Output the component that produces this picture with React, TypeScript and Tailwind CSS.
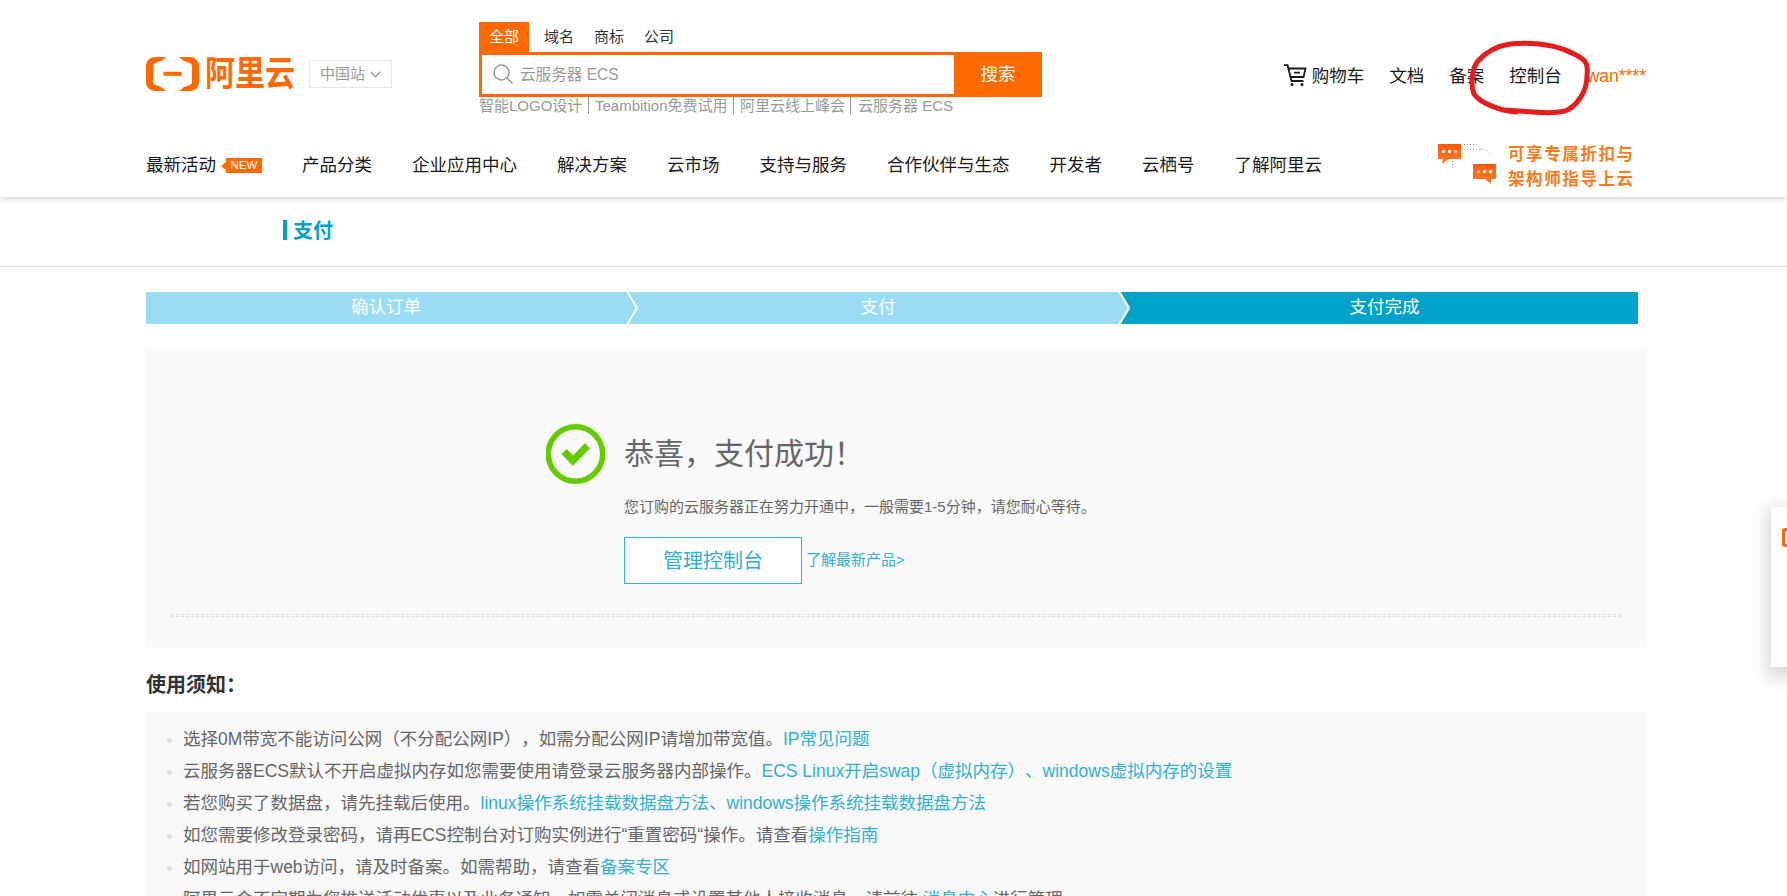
import React from "react";

const nav = ["产品分类", "企业应用中心", "解决方案", "云市场", "支持与服务", "合作伙伴与生态", "开发者", "云栖号", "了解阿里云"];

const notes: { text: string; link: string; tail?: string }[] = [
  { text: "选择0M带宽不能访问公网（不分配公网IP），如需分配公网IP请增加带宽值。", link: "IP常见问题" },
  { text: "云服务器ECS默认不开启虚拟内存如您需要使用请登录云服务器内部操作。", link: "ECS Linux开启swap（虚拟内存）、windows虚拟内存的设置" },
  { text: "若您购买了数据盘，请先挂载后使用。", link: "linux操作系统挂载数据盘方法、windows操作系统挂载数据盘方法" },
  { text: "如您需要修改登录密码，请再ECS控制台对订购实例进行“重置密码“操作。请查看", link: "操作指南" },
  { text: "如网站用于web访问，请及时备案。如需帮助，请查看", link: "备案专区" },
  { text: "阿里云会不定期为您推送活动优惠以及业务通知，如需关闭消息或设置其他人接收消息，请前往 ", link: "消息中心", tail: "进行管理" },
];

function Logo() {
  return (
    <div className="flex h-[34px] w-[148px] items-center text-[#ff6a00]">
      <svg width="53" height="34" viewBox="0 0 53 34" fill="currentColor" className="shrink-0">
        <path d="M20 0H9C4 0 0 4 0 9v16c0 5 4 9 9 9h11l-5-4-5.500-2c-1.700-.6-2.500-1.600-2.500-3.300V9.300c0-1.700.8-2.700 2.500-3.300l5.500-2z" />
        <path d="M33 0h11c5 0 9 4 9 9v16c0 5-4 9-9 9H33l5-4 5.500-2c1.700-.6 2.500-1.600 2.500-3.300V9.300c0-1.700-.8-2.700-2.500-3.300l-5.500-2z" />
        <rect x="17.500" y="14.800" width="18" height="4" />
      </svg>
      <span className="ml-[6px] origin-center scale-y-[1.16] whitespace-nowrap text-[30px] leading-[34px] font-bold">阿里云</span>
    </div>
  );
}

function Cart() {
  return (
    <svg width="23" height="23" viewBox="0 0 23 23" fill="none" stroke="#1a1a1a" strokeWidth="1.800" className="mr-[5px] shrink-0">
      <path d="M0 1.200h3.600L7.500 17H19.500M4.500 4.500H21.500L19.500 13H6.600M10 8.700h6" />
      <circle cx="8" cy="20.500" r="1.500" fill="#1a1a1a" stroke="none" />
      <circle cx="18" cy="20.500" r="1.500" fill="#1a1a1a" stroke="none" />
    </svg>
  );
}

function PromoArt() {
  return (
    <svg width="62" height="44" viewBox="0 0 62 44" className="shrink-0">
      <defs>
        <linearGradient id="bubble" x1="0" y1="0" x2="0" y2="1">
          <stop offset="0" stopColor="#ff5a08" />
          <stop offset="1" stopColor="#ff8030" />
        </linearGradient>
      </defs>
      <path d="M1 1h23v15H11.500l-6 5v-5H1z" fill="url(#bubble)" />
      <path d="M36 21h23v15h-5v5l-6-5H36z" fill="url(#bubble)" />
      <g fill="#fff">
        <circle cx="6.500" cy="8.500" r="1.700" /><circle cx="12.500" cy="8.500" r="1.700" /><circle cx="18.500" cy="8.500" r="1.700" opacity=".6" />
        <circle cx="41.500" cy="28.500" r="1.700" opacity=".6" /><circle cx="47.500" cy="28.500" r="1.700" /><circle cx="53.500" cy="28.500" r="1.700" />
      </g>
      <path d="M27 6.500h18q7 0 8 6M15.500 18v8" fill="none" stroke="#f59a60" strokeDasharray="1 2" />
      <path d="M27 1.500h11q5 1 6 5" fill="none" stroke="#888" strokeDasharray="1 2" />
    </svg>
  );
}

function Header() {
  return (
    <header className="relative h-[197px] bg-white shadow-[0_2px_6px_rgba(0,0,0,0.16)]">
      <div className="ml-[146px] flex h-[130px] w-[1500px] items-start">
        <div className="mt-[57px] flex w-[333px] items-start">
          <Logo />
          <div className="mt-[3px] ml-[15px] flex h-[28px] w-[83px] items-center justify-center gap-[5px] border border-[#e8e8e8] text-[15px] text-[#999]">
            中国站
            <svg width="11" height="7" viewBox="0 0 11 7" fill="none" stroke="#999" strokeWidth="1.300"><path d="M.7.7l4.800 5 4.800-5" /></svg>
          </div>
        </div>
        <div className="mt-[22px] w-[563px] text-[15px]">
          <div className="flex h-[30px] items-center text-[#333]">
            <span className="flex h-[30px] w-[50px] items-center justify-center bg-[#ff6a00] text-white">全部</span>
            <span className="ml-[15px]">域名</span>
            <span className="ml-[20px]">商标</span>
            <span className="ml-[20px]">公司</span>
          </div>
          <div className="flex h-[45px] border-[3px] border-r-0 border-[#ff6a00]">
            <div className="flex w-[472px] items-center text-[15.600px] text-[#999]">
              <svg width="21" height="21" viewBox="0 0 21 21" fill="none" stroke="#999" strokeWidth="1.500" className="mr-[6px] ml-[11px]">
                <circle cx="8.500" cy="8.500" r="7.500" /><path d="M14 14l5.500 5.500" />
              </svg>
              <span className="pt-px">云服务器 ECS</span>
            </div>
            <div className="-my-[3px] flex w-[88px] items-center justify-center bg-[#ff6a00] text-[17.500px] text-white">搜索</div>
          </div>
          <div className="flex h-[17px] items-center whitespace-nowrap leading-[17px] text-[#999]">
            <span className="w-[110px] border-r border-[#999]">智能LOGO设计</span>
            <span className="w-[145px] border-r border-[#999] pl-[6px]">Teambition免费试用</span>
            <span className="w-[117px] border-r border-[#999] pl-[6px]">阿里云线上峰会</span>
            <span className="pl-[7px]">云服务器 ECS</span>
          </div>
        </div>
        <div className="mt-[62px] ml-auto flex h-[27px] items-center whitespace-nowrap text-[17.500px] text-[#1a1a1a]">
          <Cart />
          <span className="pt-px">购物车</span>
          <span className="ml-[25px] pt-px">文档</span>
          <span className="ml-[25px] pt-px">备案</span>
          <span className="ml-[25px] pt-px">控制台</span>
          <span className="ml-[25px] pt-px text-[#ff6a00]">wan****</span>
        </div>
      </div>
      <div className="ml-[146px] flex h-[67px] w-[1500px] items-start whitespace-nowrap text-[17.500px] text-[#1a1a1a]">
        <div className="mt-[22px] flex h-[27px] items-center gap-[40px]">
          <span className="flex items-center">
            最新活动
            <svg width="5" height="8" viewBox="0 0 5 8" className="ml-[5px]"><path d="M0 4L5 0v8z" fill="#ff6a00" /></svg>
            <span className="flex h-[15px] w-[36px] items-center justify-center bg-[#ff6a00] text-[11.500px] text-white">NEW</span>
          </span>
          {nav.map((n) => <span key={n}>{n}</span>)}
        </div>
        <div className="mt-[13px] ml-auto flex w-[209px]">
          <PromoArt />
          <div className="-mt-px ml-[9px] text-[16.500px] leading-[25px] font-bold tracking-[1.600px] text-[#ff7a1a]">
            <div>可享专属折扣与</div>
            <div>架构师指导上云</div>
          </div>
        </div>
      </div>
      <svg className="absolute top-[40px] left-[1466px]" width="126" height="80" viewBox="0 0 126 80" fill="none" stroke="#e71d1d" strokeWidth="5" strokeLinecap="round" strokeLinejoin="round">
        <path d="M50 72C36 71 15 64 8 54C4 44 6 28 12 21C20 12 30 6 44 4C65 2 90 4 110 15C122 21 122 26 121 36C121 52 110 67 99 71C82 75 64 71 36 70" />
      </svg>
    </header>
  );
}

function Steps() {
  return (
    <div className="flex h-[32px] w-[1492px] bg-[#9bdcf5] text-[17.500px] leading-[30px] text-white">
      <div className="w-[480px] text-center">确认订单</div>
      <svg width="12" height="32" viewBox="0 0 12 32"><path d="M1.500 0l9.500 16L1.500 32" fill="none" stroke="#fff" strokeWidth="2" /></svg>
      <div className="w-[480px] text-center">支付</div>
      <svg width="13" height="32" viewBox="0 0 13 32"><path d="M1.500 0H13v32H1.500l9.500-16z" fill="#00a2ca" /><path d="M1.500 0l9.500 16L1.500 32" fill="none" stroke="#fff" strokeWidth="2.200" /></svg>
      <div className="w-[507px] bg-[#00a2ca] text-center">支付完成</div>
    </div>
  );
}

export default function App() {
  return (
    <div className="relative h-[896px] w-[1787px] overflow-hidden bg-white font-['Liberation_Sans','Noto_Sans_CJK_SC',sans-serif] text-[#666] [text-spacing-trim:space-all]">
      <Header />
      <div className="flex h-[70px] border-b border-[#e0e0e0] pt-[23px] pl-[283px]">
        <div className="flex h-[20px] items-center border-l-4 border-[#00a2ca] pt-[2px] pl-[6px] text-[20px] font-bold text-[#00a2ca]">支付</div>
      </div>
      <main className="ml-[146px] w-[1500px] pt-[25px]">
        <Steps />
        <section className="mt-[25px] h-[298px] bg-[#f9f9f9] pt-[75px]">
          <div className="ml-[400px] flex items-start">
            <svg width="60" height="60" viewBox="0 0 60 60" className="shrink-0">
              <circle cx="29.500" cy="30" r="27.200" fill="none" stroke="#66cc00" strokeWidth="5.600" />
              <path d="M15.500 30l5.200-5 6.300 6.500L39 19l5 5.200L26.800 42z" fill="#66cc00" />
            </svg>
            <div className="ml-[18px]">
              <h1 className="h-[60px] text-[30px] leading-[59px]">恭喜，支付成功！</h1>
              <p className="mt-[12px] h-[22px] text-[15px] leading-[22px]">您订购的云服务器正在努力开通中，一般需要1-5分钟，请您耐心等待。</p>
              <div className="mt-[19px] flex items-center text-[#31b0d0]">
                <button className="h-[47px] w-[178px] border border-[#31b5d0] bg-white text-[20px] text-[#31b0d0]">管理控制台</button>
                <a className="ml-[4px] text-[15px]">了解最新产品&gt;</a>
              </div>
            </div>
          </div>
          <div className="mt-[30px] ml-[25px] h-[3px] w-[1450px] border border-dashed border-[#ddd]" />
        </section>
        <h2 className="mt-[23px] h-[30px] text-[20px] leading-[30px] font-bold text-[#333]">使用须知：</h2>
        <ul className="mt-[12px] h-[200px] bg-[#f9f9f9] pt-[11px] text-[17.500px] leading-[32px] whitespace-nowrap">
          {notes.map((n) => (
            <li key={n.link} className="flex h-[32px] items-center pl-[21px]">
              <span className="mt-[2px] mr-[11px] size-[5px] rounded-full bg-[#ddd]" />
              <span className="whitespace-pre">{n.text}<a className="text-[#31b0d0]">{n.link}</a>{n.tail}</span>
            </li>
          ))}
        </ul>
      </main>
      <aside className="absolute top-[507px] left-[1771px] h-[160px] w-[80px] bg-white pt-[21px] pl-[11px] shadow-[0_6px_16px_4px_rgba(0,0,0,0.16)]">
        <div className="h-[19px] w-[24px] rounded-[3px] border-[3px] border-[#ff6a00]" />
      </aside>
    </div>
  );
}
